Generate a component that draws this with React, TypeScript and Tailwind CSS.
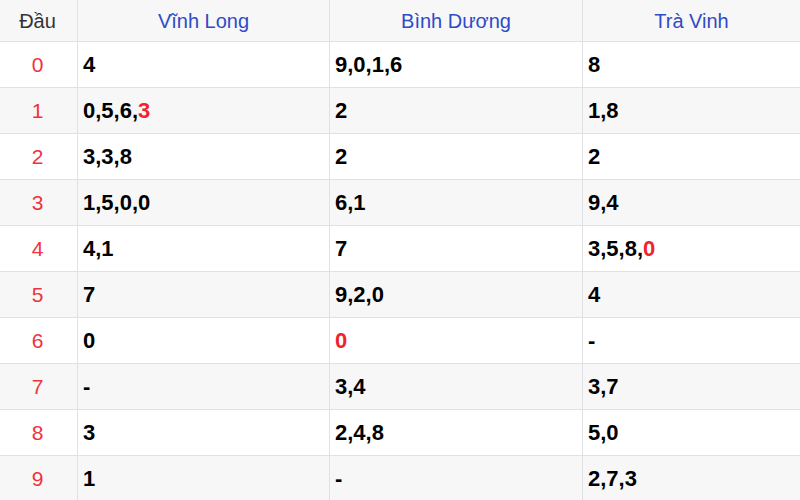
import React from "react";

type Part = { t: string; red?: boolean };
const rows: Part[][][] = [
  [[{ t: "4" }], [{ t: "9,0,1,6" }], [{ t: "8" }]],
  [[{ t: "0,5,6," }, { t: "3", red: true }], [{ t: "2" }], [{ t: "1,8" }]],
  [[{ t: "3,3,8" }], [{ t: "2" }], [{ t: "2" }]],
  [[{ t: "1,5,0,0" }], [{ t: "6,1" }], [{ t: "9,4" }]],
  [[{ t: "4,1" }], [{ t: "7" }], [{ t: "3,5,8," }, { t: "0", red: true }]],
  [[{ t: "7" }], [{ t: "9,2,0" }], [{ t: "4" }]],
  [[{ t: "0" }], [{ t: "0", red: true }], [{ t: "-" }]],
  [[{ t: "-" }], [{ t: "3,4" }], [{ t: "3,7" }]],
  [[{ t: "3" }], [{ t: "2,4,8" }], [{ t: "5,0" }]],
  [[{ t: "1" }], [{ t: "-" }], [{ t: "2,7,3" }]],
];

const widths = ["w-[78px]", "w-[252px]", "w-[253px]", "flex-1"];

function Cell({ parts }: { parts: Part[] }) {
  return (
    <span>
      {parts.map((p, i) => (
        <span key={i} className={p.red ? "text-[#f0232f]" : "text-black"}>
          {p.t}
        </span>
      ))}
    </span>
  );
}

export default function App() {
  return (
    <div
      className="w-[800px] h-[500px] overflow-hidden bg-white"
      style={{ fontFamily: '"Liberation Sans", Arial, sans-serif' }}
    >
      <div className="flex h-[42px] bg-[#f7f7f7] border-b border-[#dfe1e4] text-[20px]">
        <div className={`${widths[0]} border-r border-[#dfe1e4] flex items-center justify-center pr-[2px] text-[#333]`}>
          Đầu
        </div>
        <div className={`${widths[1]} border-r border-[#dfe1e4] flex items-center justify-center text-[#2f4bc6]`}>
          Vĩnh Long
        </div>
        <div className={`${widths[2]} border-r border-[#dfe1e4] flex items-center justify-center text-[#2f4bc6]`}>
          Bình Dương
        </div>
        <div className={`${widths[3]} flex items-center justify-center text-[#2f4bc6]`}>
          Trà Vinh
        </div>
      </div>
      {rows.map((r, i) => (
        <div
          key={i}
          className={`flex h-[46px] border-b border-[#dfe1e4] ${i % 2 === 1 ? "bg-[#f7f7f7]" : "bg-white"}`}
        >
          <div className={`${widths[0]} border-r border-[#dfe1e4] flex items-center justify-center pr-[2px] text-[21px] text-[#f0323e]`}>
            {i}
          </div>
          {r.map((c, j) => (
            <div
              key={j}
              className={`${widths[j + 1]} ${j < 2 ? "border-r border-[#dfe1e4]" : ""} flex items-center pl-[5px] text-[22px] font-bold`}
            >
              <Cell parts={c} />
            </div>
          ))}
        </div>
      ))}
    </div>
  );
}
